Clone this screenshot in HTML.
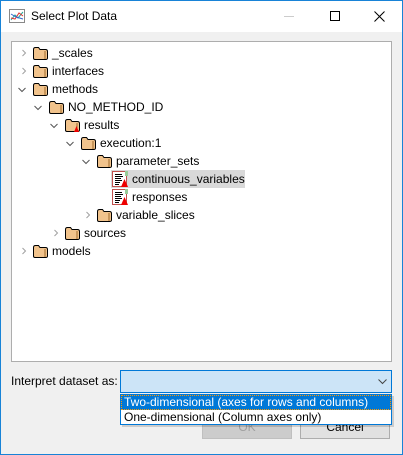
<!DOCTYPE html>
<html><head><style>
*{margin:0;padding:0;box-sizing:border-box}
body{width:403px;height:455px;position:relative;background:#f0f0f0;font-family:"Liberation Sans",sans-serif;font-size:12px;color:#000;overflow:hidden}
.win{position:absolute;left:0;top:0;width:403px;height:455px;border:1px solid #1883d7;background:#f0f0f0}
.title{position:absolute;left:0;top:0;width:401px;height:31px;background:#fff}
.ttl{position:absolute;left:30px;top:8px;font-size:12px}
.tree{position:absolute;left:11px;top:41px;width:381px;height:321px;background:#fff;border:1px solid #adadad}
.row{position:absolute;height:18px;line-height:18px;white-space:nowrap}
.chev{position:absolute;top:5px;width:8px;height:8px}
.abs{position:absolute}
</style></head><body>
<div class="win">
<div class="title">
<svg class="abs" style="left:8px;top:8px" width="16" height="14"><rect x="0.5" y="0.5" width="15" height="13" fill="#fff" stroke="#888"/><path d="M2 11 L6 6 L9 9 L14 3" stroke="#2a9" fill="none"/><path d="M2 9 L6 10 L10 4 L14 7" stroke="#d33" fill="none"/><path d="M2 5 L7 8 L14 10" stroke="#36c" fill="none"/></svg>
<div class="ttl">Select Plot Data</div>
<div class="abs" style="left:283px;top:15px;width:10px;height:1px;background:#ccc"></div>
<div class="abs" style="left:329px;top:10px;width:10px;height:10px;border:1px solid #000"></div>
<svg class="abs" style="left:373px;top:10px" width="11" height="11"><path d="M0.5 0.5 L10.5 10.5 M10.5 0.5 L0.5 10.5" stroke="#000"/></svg>
</div>
</div>
<div class="tree" id="tree"></div>
<div class="abs" style="left:11px;top:374px">Interpret dataset as:</div>
<div class="abs" style="left:120px;top:370px;width:272px;height:23px;background:#cce4f7;border:1px solid #0078d7"></div>
<svg class="abs" style="left:378px;top:379px" width="9" height="6"><path d="M0.5 0.5 L4.5 4.5 L8.5 0.5" stroke="#444" fill="none"/></svg>
<div class="abs" style="left:202px;top:416px;width:90px;height:23px;background:#ccc;border:1px solid #bfbfbf;color:#a0a0a0;text-align:center;line-height:21px">OK</div>
<div class="abs" style="left:300px;top:416px;width:90px;height:23px;background:#e1e1e1;border:1px solid #adadad;text-align:center;line-height:21px">Cancel</div>
<div class="abs" style="left:122px;top:396px;width:272px;height:31px;background:rgba(0,0,0,0.15)"></div>
<div class="abs" style="left:120px;top:394px;width:272px;height:31px;background:#fff;border:1px solid #0078d7">
<div style="position:absolute;left:0;top:0;width:270px;height:15px;background:#0078d7;color:#fff;border:1px dotted #f90;line-height:13px;padding-left:2px">Two-dimensional (axes for rows and columns)</div>
<div style="position:absolute;left:3px;top:15px;line-height:14px">One-dimensional (Column axes only)</div>
</div>
<script>
var items=[[0,'_scales','c',0],[0,'interfaces','c',0],[0,'methods','o',0],[1,'NO_METHOD_ID','o',0],[2,'results','o',1],[3,'execution:1','o',0],[4,'parameter_sets','o',0],[5,'continuous_variables','',2],[5,'responses','',2],[4,'variable_slices','c',0],[2,'sources','c',0],[0,'models','c',0]];
var t=document.getElementById('tree'),h='';
items.forEach(function(it,i){
var y=2+i*18,x=it[0]*16;
if(i==7)h+='<div class="abs" style="left:'+(x+19)+'px;top:'+y+'px;width:134px;height:18px;background:#d9d9d9"></div>';
if(it[2]=='c')h+='<svg class="chev" style="left:'+(x+8)+'px;top:'+(y+5)+'px" width="8" height="8"><path d="M2.5 1 L5.5 4 L2.5 7" stroke="#a0a0a0" fill="none"/></svg>';
if(it[2]=='o')h+='<svg class="chev" style="left:'+(x+6)+'px;top:'+(y+6)+'px" width="8" height="8"><path d="M0.5 2 L4 5.5 L7.5 2" stroke="#555" fill="none"/></svg>';
if(it[3]==2){h+='<svg class="abs" style="left:'+(x+20)+'px;top:'+(y+1)+'px" width="17" height="17"><rect x="0.5" y="0.5" width="14" height="15" fill="#fff" stroke="#c0504d"/><rect x="13" y="0" width="3" height="5" fill="#9c9"/><path d="M3 3.5h7M3 5.5h8M3 7.5h6M3 9.5h7M3 11.5h5M3 13.5h4" stroke="#000"/><path d="M9 16 L12.5 8 L16 16Z" fill="#e00"/></svg>';}
else{h+='<svg class="abs" style="left:'+(x+20)+'px;top:'+(y+3)+'px" width="17" height="14"><path d="M1.5 2.5 Q1.5 0.5 3.5 0.5 H6.5 L8 2.5 H13.5 Q15.5 2.5 15.5 4.5 V11 Q15.5 12.5 13.5 12.5 H3 Q1.5 12.5 1.5 11Z" fill="#f1c38c" stroke="#000"/><path d="M13 4 V12" stroke="#a0682a"/>'+(it[3]==1?'<path d="M10 13 L12.5 7 L15 13Z" fill="#e00"/>':'')+'</svg>';}
h+='<div class="row" style="left:'+(x+40)+'px;top:'+y+'px">'+it[1]+'</div>';
});
t.innerHTML=h;
</script>
</body></html>
